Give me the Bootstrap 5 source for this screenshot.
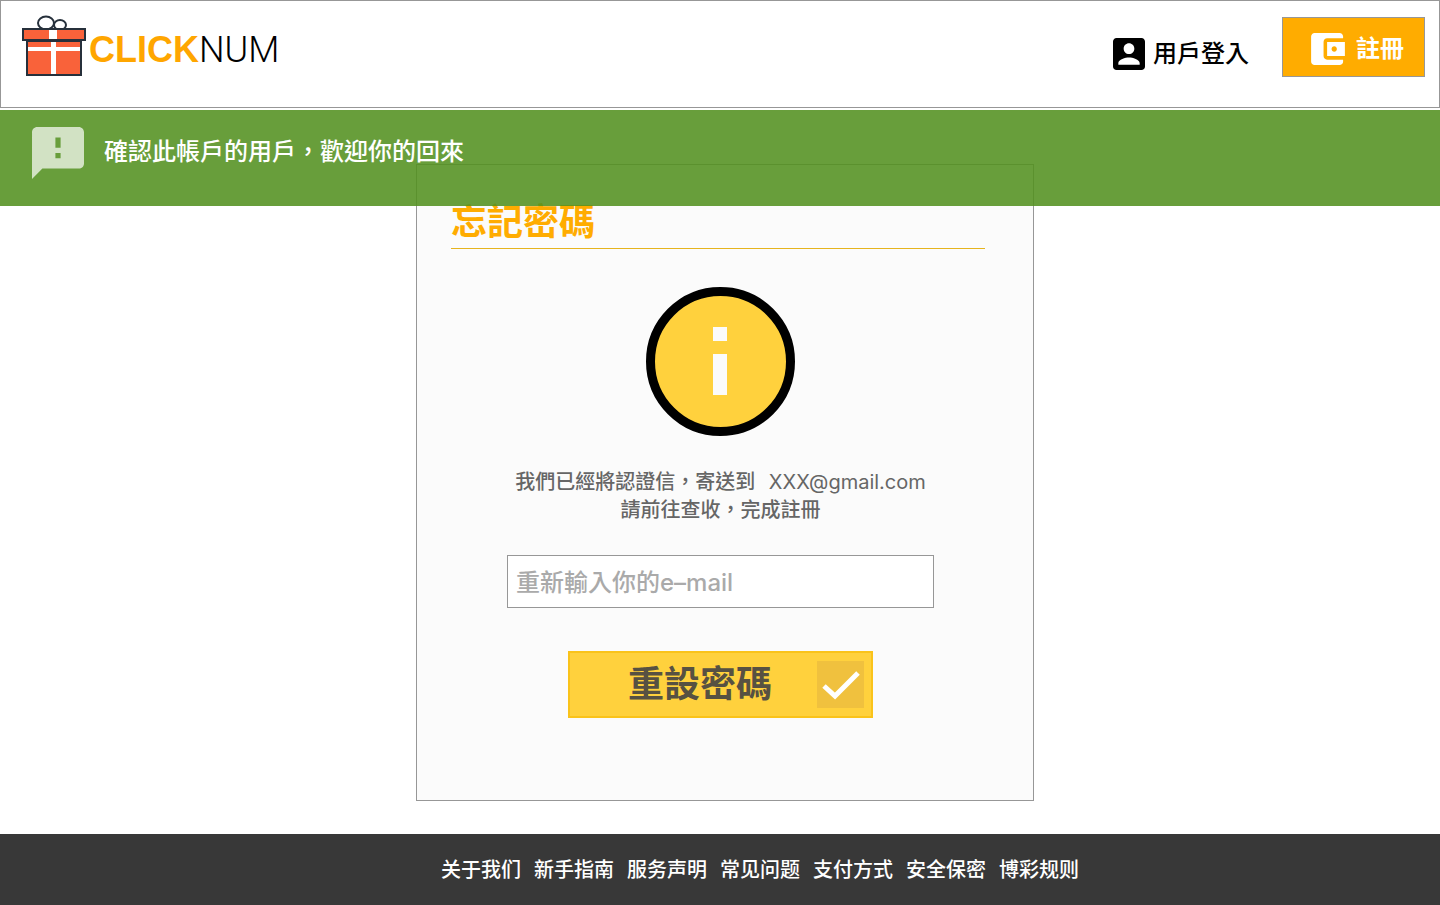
<!DOCTYPE html>
<html lang="zh-Hant">
<head>
<meta charset="utf-8">
<meta name="viewport" content="width=device-width, initial-scale=1">
<title>CLICKNUM 忘記密碼</title>
<link href="https://cdn.jsdelivr.net/npm/bootstrap@5.3.0/dist/css/bootstrap.min.css" rel="stylesheet">
<style>
  body { font-family: Inter, "Noto Sans CJK TC", sans-serif; font-weight: 500; color: #111; background: #fff; }
  svg { display: block; flex-shrink: 0; }
  .site-header { border: 1px solid #979797; min-height: 108px; padding: 14px 14px 14px 20px; }
  .brand { font-size: 36px; line-height: 40px; color: #000; }
  .brand-name { padding-top: 6px; }
  .brand-strong { font-family: "Liberation Sans", sans-serif; font-weight: 700; color: #ffa600; }
  .brand-light { font-family: Roboto, sans-serif; font-weight: 300; }
  .account-nav { gap: 33px; padding-top: 2px; }
  .login-link { font-size: 24px; line-height: 34px; color: #000; margin-top: 20px; }
  .btn-register { --bs-btn-color: #fff; --bs-btn-bg: #ffac00; --bs-btn-border-color: #979797; --bs-btn-hover-color: #fff; --bs-btn-hover-bg: #f0a200;
    font-size: 24px; line-height: 34px; font-weight: 700; padding: 14px 20px 10px 28px; gap: 11px; }
  .notice { top: 2px; min-height: 96px; padding: 17px 32px; gap: 20px; background: rgba(83, 145, 32, .88); color: #fff; font-size: 24px; line-height: 50px; }
  .main-area { padding: 56px 0 33px 10px; }
  .reset-card { max-width: 618px; padding: 37px 43px 82px 34px; background: #fbfbfb; border: 1px solid #979797; }
  .reset-title { font-size: 36px; line-height: 40px; font-weight: 700; color: #ffac00; padding-bottom: 6px; border-bottom: 1px solid #e6b41e; margin: 0 5px 38px 0; }
  .sent-text { font-size: 20px; line-height: 28px; color: #666; margin: 32px 0 31px; }
  .sent-mail { font-weight: 400; margin-left: 3px; }
  .mail-input { max-width: 427px; height: 53px; padding: 2px 8px 0; font-size: 24px; font-weight: 500; border-color: #979797; background: #fff; }
  .mail-input::placeholder { color: #aaa; }
  .btn-reset { --bs-btn-color: #575142; --bs-btn-bg: #ffd13d; --bs-btn-border-color: #fac31a; --bs-btn-border-width: 2px; --bs-btn-hover-color: #575142; --bs-btn-hover-bg: #fac31a;
    max-width: 305px; margin-top: 43px; padding: 8px 7px 8px 58px; font-size: 36px; line-height: 47px; font-weight: 700; }
  .site-footer { background: #383838; min-height: 71px; padding: 20px 0 21px 80px; font-family: "Noto Sans CJK SC", sans-serif; font-size: 20px; line-height: 30px; }
  .site-footer ul { column-gap: 13px; }
</style>
</head>
<body class="d-flex flex-column min-vh-100">
<header class="site-header d-flex flex-wrap justify-content-between align-items-start">
  <a href="#" class="brand d-flex align-items-center text-decoration-none">
    <svg width="68" height="62" viewBox="0 0 68 62" aria-hidden="true">
      <g fill="#fff" stroke="#26303b" stroke-width="2">
        <ellipse cx="25" cy="8" rx="8" ry="6.500"/>
        <ellipse cx="39" cy="10" rx="6" ry="5"/>
        <path fill="#f9623a" d="M6 26h54v34H6z"/>
        <path fill="#f9623a" d="M2 14h62v11H2z"/>
      </g>
      <path fill="#fff" d="M28 15h8v9h-8zM30 27h5v32h-5zM7 32h52v4H7z"/>
    </svg>
    <span class="brand-name"><span class="brand-strong">CLICK</span><span class="brand-light">NUM</span></span>
  </a>
  <nav class="account-nav d-flex align-items-start" aria-label="帳戶">
    <a href="#" class="login-link d-flex align-items-center gap-2 text-decoration-none">
      <svg width="32" height="32" viewBox="3 3 18 18" aria-hidden="true"><path d="M3 5v14c0 1.100.89 2 2 2h14c1.100 0 2-.9 2-2V5c0-1.100-.9-2-2-2H5c-1.110 0-2 .9-2 2zm12 4c0 1.660-1.340 3-3 3s-3-1.340-3-3 1.340-3 3-3 3 1.340 3 3zm-9 8c0-2 4-3.100 6-3.100s6 1.100 6 3.100v1H6v-1z"/></svg>
      用戶登入
    </a>
    <button type="button" class="btn btn-register rounded-0 d-flex align-items-center">
      <svg width="34" height="32" viewBox="3 3 19 18" fill="#fff" aria-hidden="true"><path d="M21 18v1c0 1.100-.9 2-2 2H5c-1.110 0-2-.9-2-2V5c0-1.100.89-2 2-2h14c1.100 0 2 .9 2 2v1h-9c-1.110 0-2 .9-2 2v8c0 1.100.89 2 2 2h9zm-9-2h10V8H12v8zm4-2.500c-.83 0-1.500-.67-1.500-1.500s.67-1.500 1.500-1.500 1.500.67 1.500 1.500-.67 1.500-1.500 1.500z"/></svg>
      註冊
    </button>
  </nav>
</header>

<main class="main-area position-relative flex-grow-1">
  <div class="notice position-absolute start-0 w-100 d-flex align-items-start" role="status">
    <svg width="52" height="52" viewBox="2 2 20 20" fill="#fff" fill-opacity=".7" aria-hidden="true"><path d="M20 2H4c-1.100 0-1.990.9-1.990 2L2 22l4-4h14c1.100 0 2-.9 2-2V4c0-1.100-.9-2-2-2zm-7 12h-2v-2h2v2zm0-4h-2V6h2v4z"/></svg>
    <span>確認此帳戶的用戶，歡迎你的回來</span>
  </div>
  <section class="reset-card mx-auto">
    <h1 class="reset-title">忘記密碼</h1>
    <svg class="mx-auto" width="149" height="149" viewBox="0 0 149 149" aria-hidden="true">
      <circle cx="74.500" cy="74.500" r="70" fill="#ffd13d" stroke="#000" stroke-width="9"/>
      <path fill="#fbfbfb" d="M67 40h14v14H67zM67 67h14v41H67z"/>
    </svg>
    <p class="sent-text text-center">我們已經將認證信，寄送到&nbsp; <span class="sent-mail">XXX@gmail.com</span><br>請前往查收，完成註冊</p>
    <form>
      <input type="email" aria-label="e-mail" class="mail-input form-control rounded-0 mx-auto" placeholder="重新輸入你的e–mail">
      <button type="submit" class="btn btn-reset rounded-0 w-100 mx-auto d-flex align-items-center justify-content-between">
        重設密碼
        <svg width="47" height="47" viewBox="0 0 47 47" aria-hidden="true"><path fill="#f0c13e" d="M0 0h47v47H0z"/><path d="M7 25l11 10 23-23" fill="none" stroke="#fff" stroke-width="5"/></svg>
      </button>
    </form>
  </section>
</main>

<footer class="site-footer" lang="zh-Hans">
  <ul class="list-unstyled d-flex flex-wrap justify-content-center mb-0">
    <li><a href="#" class="text-white text-decoration-none">关于我们</a></li>
    <li><a href="#" class="text-white text-decoration-none">新手指南</a></li>
    <li><a href="#" class="text-white text-decoration-none">服务声明</a></li>
    <li><a href="#" class="text-white text-decoration-none">常见问题</a></li>
    <li><a href="#" class="text-white text-decoration-none">支付方式</a></li>
    <li><a href="#" class="text-white text-decoration-none">安全保密</a></li>
    <li><a href="#" class="text-white text-decoration-none">博彩规则</a></li>
  </ul>
</footer>
<script src="https://cdn.jsdelivr.net/npm/bootstrap@5.3.0/dist/js/bootstrap.bundle.min.js"></script>
</body>
</html>
